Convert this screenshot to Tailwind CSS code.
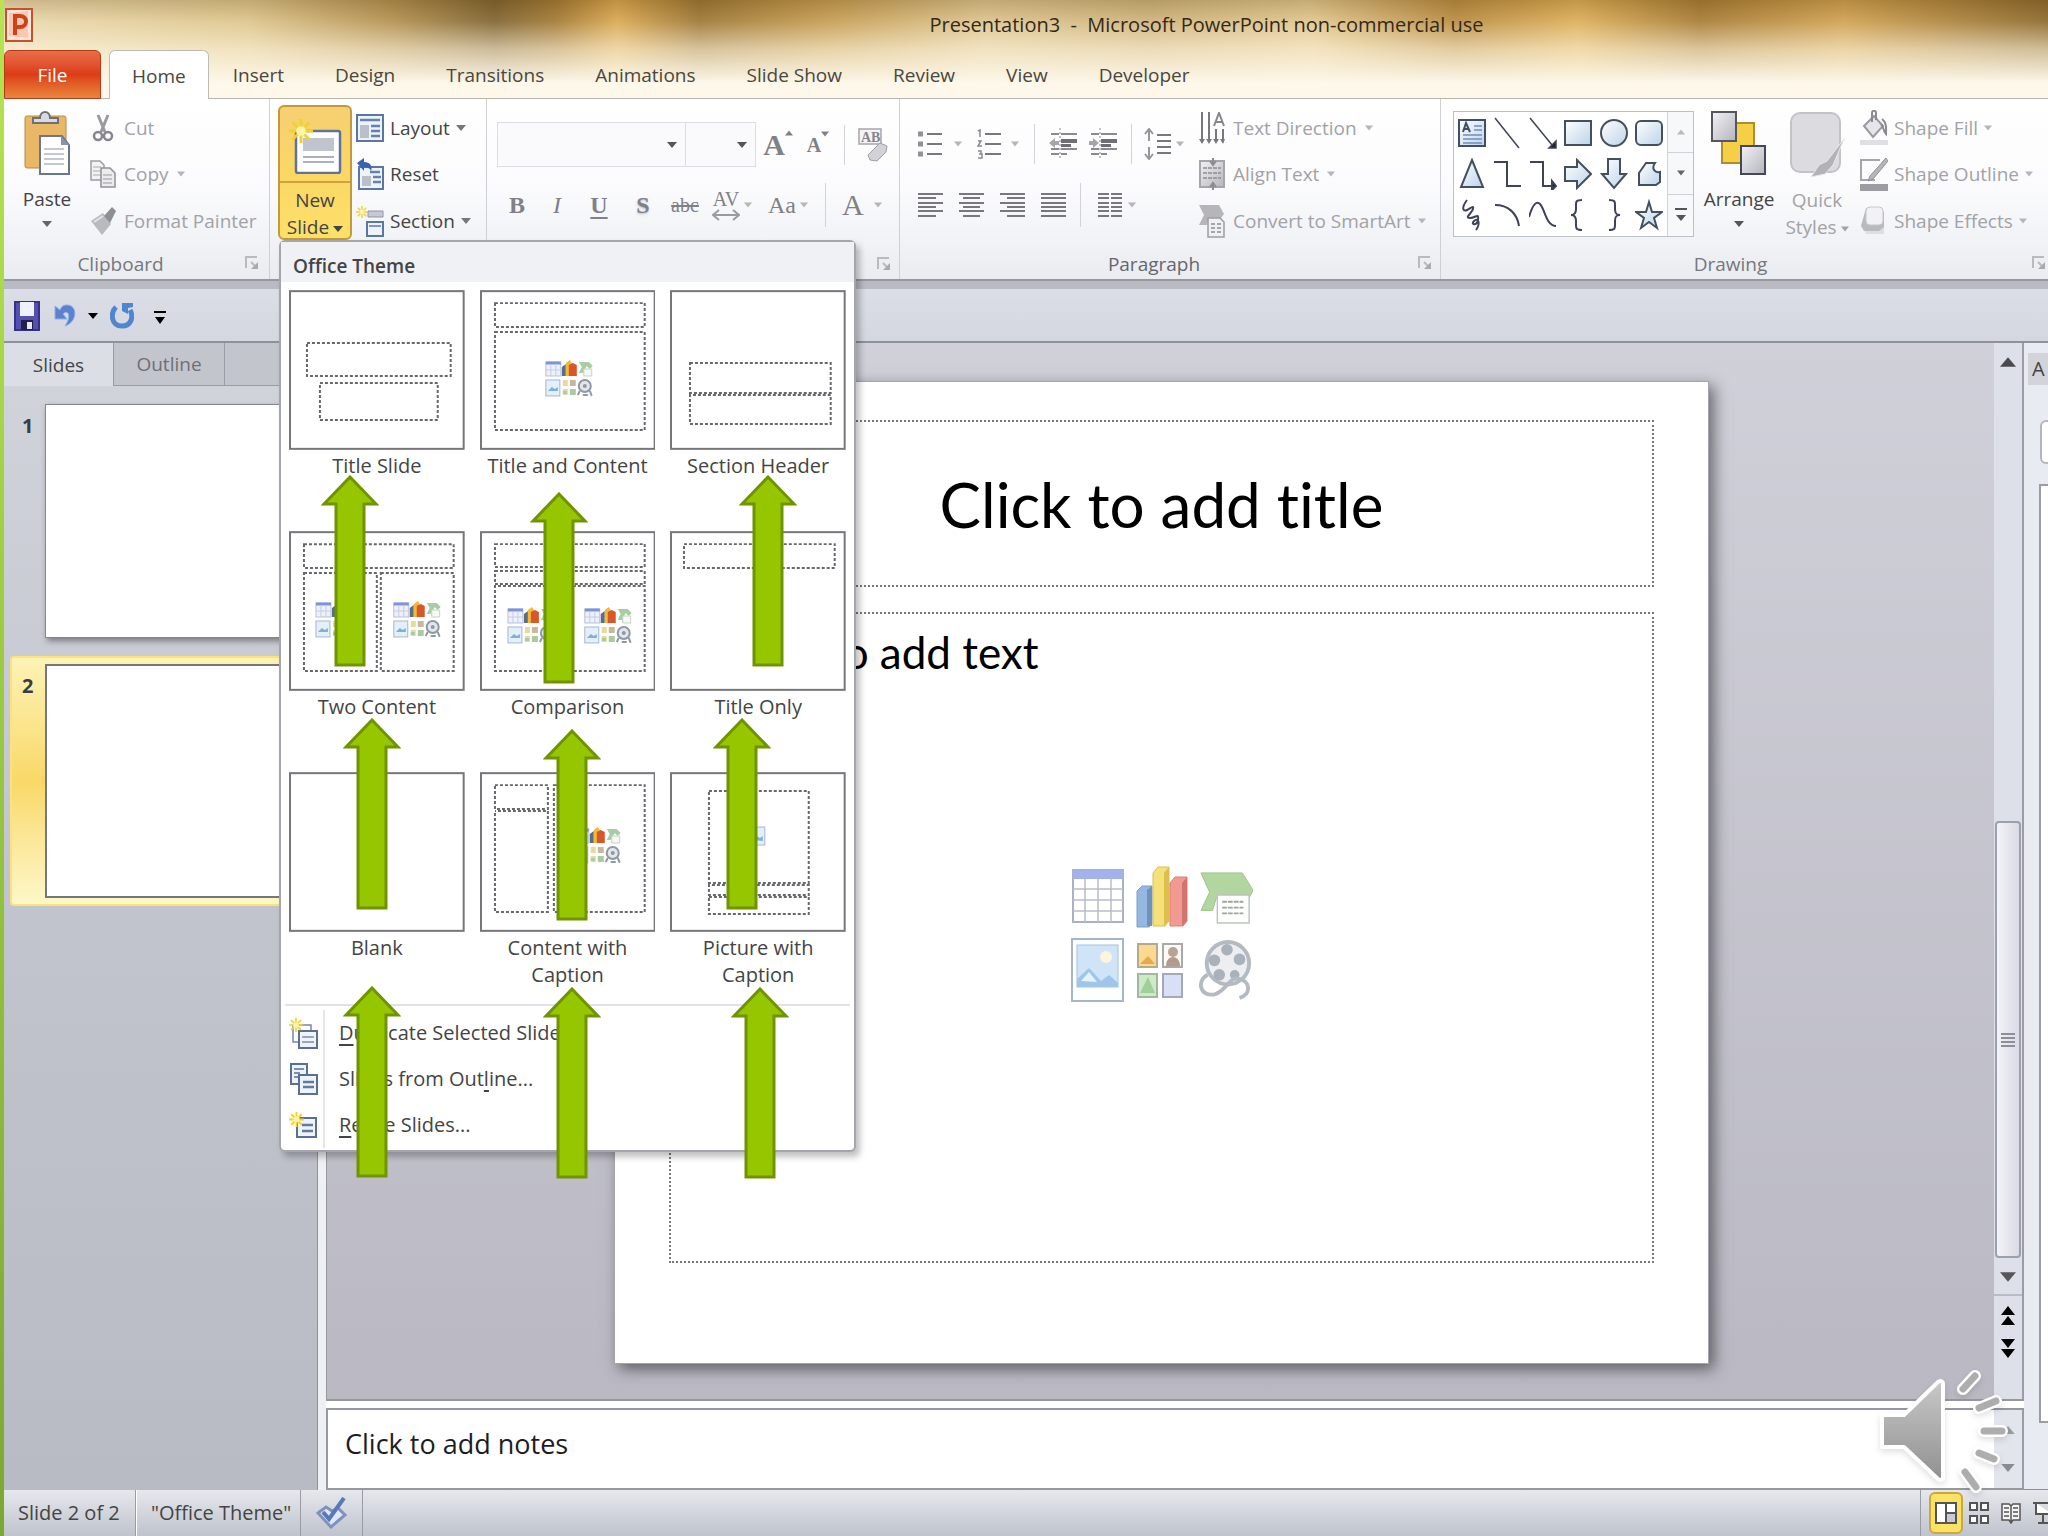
<!DOCTYPE html>
<html lang="en">
<head>
  <meta charset="UTF-8" />
  <meta name="viewport" content="width=device-width, initial-scale=1.0"/>
  <title>Presentation3 - Microsoft PowerPoint non-commercial use</title>
  <script src="https://cdn.jsdelivr.net/npm/@tailwindcss/browser@4"></script>
</head>
<body class="font-['Open_Sans','Noto_Sans',sans-serif] text-[19px] leading-7 text-[#444]">

  <!-- Icon sprite -->
  <svg class="absolute h-0 w-0" aria-hidden="true">
    <defs>
      <linearGradient id="gBlue" x1="0" y1="0" x2="1" y2="1"><stop offset="0" stop-color="#fff"/><stop offset="1" stop-color="#bcd3ea"/></linearGradient>
      <linearGradient id="gGrey" x1="0" y1="0" x2="1" y2="1"><stop offset="0" stop-color="#f2f2f5"/><stop offset="1" stop-color="#b4b4bc"/></linearGradient>
      <linearGradient id="gSpeaker" x1="0" y1="0" x2="0" y2="1"><stop offset="0" stop-color="#c8c8c8"/><stop offset="1" stop-color="#909090"/></linearGradient>
    </defs>
    <symbol id="caret" viewBox="0 0 10 6"><path d="M0 0h10L5 6z" fill="currentColor"/></symbol>
    <symbol id="launcher" viewBox="0 0 14 14"><path d="M1 12V1h11M6 6l5 5" fill="none" stroke="#b9b9c0" stroke-width="2"/><path d="M13 6v7H6z" fill="#a9a9b0"/></symbol>
    <symbol id="star" viewBox="0 0 20 20"><path d="M10 0v20M0 10h20M3 3l14 14M17 3L3 17" stroke="#f3cf2f" stroke-width="2.4"/><circle cx="10" cy="10" r="4" fill="#fff6a8"/></symbol>
    <symbol id="arrow" viewBox="0 0 58 192"><path d="M29 2L55 29H43V190H15V29H3z" fill="#95c600" stroke="#6f9400" stroke-width="3"/></symbol>
    <symbol id="contentIcons" viewBox="0 0 48 37">
      <rect x="1" y="2" width="15" height="14" fill="#eef1fa" stroke="#b5bfe0"/><path d="M1 3h15" stroke="#7f94d8" stroke-width="3"/><path d="M1 10h15M6 4v12M11 4v12" stroke="#c5cce4"/>
      <path d="M17 16V7l4-3v12z" fill="#5a6f86"/><path d="M21 16V3l4-3 2 3v13z" fill="#f2b93a"/><path d="M24 16V5l4-2 4 2v11z" fill="#d8572a"/>
      <path d="M34 2h10l4 4-3 3-3-3-4 7h-4l3-6z" fill="#a9cda2"/><path d="M39 9h8v7h-8z" fill="#f5f8f5" stroke="#c5d2c5"/>
      <rect x="1" y="20" width="14" height="16" fill="#e3f0fa" stroke="#a4b8d2"/><path d="M3 31l4-4 3 2 3-2v4z" fill="#7fb0d8"/>
      <path d="M18 20h5v6h-5zM18 29h5v6h-5z" fill="#e8d9a0"/><path d="M25 20h6v6h-6z" fill="#c8b8a0"/><path d="M25 29h6v6h-6zM18 31h4v3h-4z" fill="#a9cba0"/>
      <circle cx="40" cy="26" r="6" fill="#e3e6ea" stroke="#8f98a5" stroke-width="2"/><circle cx="40" cy="26" r="2" fill="#8f98a5"/><path d="M35 31l-2 4M45 31l2 5M38 35h5" stroke="#8f98a5" stroke-width="2"/>
    </symbol>
  </svg>

  <div class="relative flex h-screen overflow-hidden">
    <div class="w-1 shrink-0 bg-linear-to-b from-[#b5e550] to-[#7aa832]"></div>

    <div class="flex min-w-0 flex-1 flex-col">

      <!-- Title bar and ribbon tabs -->
      <header class="h-[99px] shrink-0 border-b border-[#b9b5ac] bg-[linear-gradient(to_bottom,rgba(90,60,10,0.2)_0%,rgba(255,245,215,0.1)_22%,rgba(255,247,225,0.6)_50%,#fdf8ea_85%),linear-gradient(to_right,#ead9b0_0%,#dcc48c_12%,#b28f50_19%,#7d6230_24%,#a17834_27%,#d9a750_30%,#9b7534_34%,#c39a50_40%,#dcc490_48%,#cdb27c_56%,#e0c68e_64%,#b88a40_71%,#dcae58_77%,#a67a34_83%,#cfa050_90%,#8a672c_100%)]">
        <div class="flex h-[50px] items-center">
          <svg class="ml-px h-[34px] w-7" viewBox="0 0 28 34"><rect x="1" y="1" width="26" height="32" fill="#fbe5d8" stroke="#c4532b" stroke-width="2"/><path d="M4 5l19-2v27L4 28z" fill="#f8c9b0"/><path d="M10 27V8h5c8 0 8 11 0 11h-4" fill="none" stroke="#cc431b" stroke-width="4"/></svg>
          <h1 class="flex-1 pl-[332px] text-center text-xl whitespace-pre text-[#33291a]">Presentation3  -  Microsoft PowerPoint non-commercial use</h1>
        </div>
        <nav class="flex h-[49px] items-stretch text-[#4a4640]">
          <button class="w-[97px] rounded-t-md border border-[#b8381a] bg-linear-to-b from-[#ea6d48] via-[#dc3c18] to-[#e8853c] text-white">File</button>
          <button class="-mb-px ml-2 rounded-t-md border border-b-0 border-[#c0bbb0] bg-white px-[22px]">Home</button>
          <div class="flex gap-[51px] pl-6">
            <button>Insert</button>
            <button>Design</button>
            <button>Transitions</button>
            <button>Animations</button>
            <button>Slide Show</button>
            <button>Review</button>
            <button>View</button>
            <button>Developer</button>
          </div>
        </nav>
      </header>

      <!-- Ribbon -->
      <div class="flex h-[182px] shrink-0 border-b-2 border-[#9698a0] bg-linear-to-b from-white via-[#fbfbfd] to-[#e9ecf0]">

        <!-- Clipboard -->
        <section class="flex w-[266px] shrink-0 flex-col border-r border-[#cfd0d6]">
          <div class="mt-1.5 flex h-[139px]">
            <button class="flex w-[86px] flex-col items-center pt-1.5">
              <svg class="h-[64px] w-12" viewBox="0 0 48 64"><rect x="2" y="5" width="41" height="52" rx="2" fill="#e9b765" stroke="#b98a40"/><path d="M10 12V7h7c0-8 10-8 10 0h8v5z" fill="#d8dade" stroke="#6d7078" stroke-width="2"/><path d="M17 25h22l7 9v29H17z" fill="#fff" stroke="#6a7690" stroke-width="2"/><path d="M38 25v9h8z" fill="#8a94a8"/><path d="M21 38h20M21 43h20M21 48h20M21 53h20" stroke="#b0b8c4" stroke-width="1.500"/></svg>
              <span class="mt-2.5">Paste</span>
              <svg class="mt-2 h-1.5 w-2.5 text-[#666]"><use href="#caret"/></svg>
            </button>
            <div class="flex flex-1 flex-col text-[#a2a2a6]">
              <button class="flex flex-1 items-center gap-2"><svg class="h-7 w-[26px]" viewBox="0 0 26 28"><path d="M8 1l7 17M18 1l-7 17" stroke="#9a9aa0" stroke-width="3"/><circle cx="8" cy="22" r="4" fill="none" stroke="#85858c" stroke-width="2.500"/><circle cx="18" cy="22" r="4" fill="none" stroke="#85858c" stroke-width="2.500"/></svg>Cut</button>
              <button class="flex flex-1 items-center gap-2"><svg class="h-7 w-[26px]" viewBox="0 0 26 28"><path d="M1 1h9l4 4v15H1z" fill="#f2f2f4" stroke="#9c9ca2" stroke-width="1.500"/><path d="M3 7h8M3 11h8M3 15h8" stroke="#aaa"/><path d="M11 8h9l5 5v14H11z" fill="#ececef" stroke="#909096" stroke-width="1.500"/><path d="M13 15h9M13 19h9M13 23h9" stroke="#999"/></svg>Copy<svg class="h-1.5 w-2 text-[#b5b5ba]"><use href="#caret"/></svg></button>
              <button class="flex flex-1 items-center gap-2 whitespace-nowrap"><svg class="h-[30px] w-[26px]" viewBox="0 0 26 30"><path d="M1 15l12-8 8 11-9 11z" fill="#b9b9bf"/><path d="M14 10l8-9 4 4-6 12z" fill="#8e8e95"/><path d="M4 16l9-6" stroke="#e4e4e8" stroke-width="2"/></svg>Format Painter</button>
            </div>
          </div>
          <div class="relative flex-1 pt-1.5 pr-8 text-center text-[#77777c]">Clipboard<svg class="absolute top-3 right-2.5 h-3.5 w-3.5"><use href="#launcher"/></svg></div>
        </section>

        <!-- Slides -->
        <section class="relative flex w-[217px] shrink-0 border-r border-[#cfd0d6] pt-1.5 pl-2">
          <button class="h-[135px] w-[74px] rounded-md border-2 border-[#c39a3a] bg-linear-to-b from-[#f6cf72] via-[#fbd765] to-[#fde06a]" aria-expanded="true">
            <span class="flex h-[76px] items-center justify-center border-b-2 border-[#d0a23c]">
              <svg class="h-[60px] w-[54px]" viewBox="0 0 54 60"><rect x="8" y="17" width="44" height="42" rx="2" fill="#fff" stroke="#5f7396" stroke-width="2.500"/><rect x="15" y="24" width="31" height="13" fill="#bfc4cf"/><path d="M15 43h31M15 48h31" stroke="#a9b0bf" stroke-width="2"/><use href="#star" x="1" y="4" width="24" height="26"/></svg>
            </span>
            <span class="block pt-1 leading-[27px] whitespace-nowrap">New<br>Slide<svg class="ml-1 inline h-1.5 w-2.5"><use href="#caret"/></svg></span>
          </button>
          <div class="flex h-[139px] flex-col pl-1">
            <button class="flex flex-1 items-center gap-1.5"><svg class="h-7 w-7" viewBox="0 0 28 28"><rect x="1" y="1" width="26" height="26" fill="#eef3fa" stroke="#5a76a5" stroke-width="2"/><path d="M4 6h20M15 12h9M15 17h9M15 22h9" stroke="#6481b0" stroke-width="2.500"/><rect x="4" y="11" width="9" height="13" fill="#b9c0cc"/></svg>Layout<svg class="h-1.5 w-2.5 text-[#777]"><use href="#caret"/></svg></button>
            <button class="flex flex-1 items-center gap-1.5"><svg class="h-8 w-7" viewBox="0 0 28 32"><rect x="3" y="9" width="24" height="22" fill="#eef3fa" stroke="#5a76a5" stroke-width="2"/><path d="M14 14h10M17 19h8M17 24h8" stroke="#6481b0" stroke-width="2.500"/><rect x="6" y="18" width="9" height="10" fill="#b9c0cc"/><path d="M1 5l7-5v4c6 0 9 4 7 9-1-3-4-4-7-4v4z" fill="#3b63b4"/></svg>Reset</button>
            <button class="flex flex-1 items-center gap-1.5"><svg class="h-8 w-7" viewBox="0 0 28 32"><path d="M12 6h15v6H12z" fill="#c5c9d2" stroke="#8c95a8"/><rect x="11" y="17" width="16" height="14" fill="#eef3fa" stroke="#5a76a5" stroke-width="2"/><path d="M13 21h12" stroke="#7f96be" stroke-width="2"/><use href="#star" width="12" height="14"/></svg>Section<svg class="h-1.5 w-2.5 text-[#777]"><use href="#caret"/></svg></button>
          </div>

          <!-- New Slide menu -->
          <div class="absolute top-[141px] left-[9px] z-20 w-[577px] rounded-md border-2 border-[#a4a6ae] bg-white pb-0.5 shadow-[4px_5px_6px_rgba(0,0,0,0.25)]">
            <h2 class="h-10 bg-[#f0f1f5] pt-2.5 pl-3 leading-7 font-semibold">Office Theme</h2>
            <div class="grid grid-cols-3 gap-x-[15px] px-2 pt-2 text-center text-xl leading-[27px]">
              <button class="flex h-[241px] flex-col items-center">
                <svg class="mb-0.5 h-[160px] w-full" viewBox="0 0 176 160" fill="none"><rect x="1" y="1" width="174" height="158" stroke="#77777b" stroke-width="2"/><g stroke="#67676c" stroke-width="2" stroke-dasharray="3 2"><rect x="18" y="53" width="144" height="33"/><rect x="31" y="93" width="118" height="37"/></g></svg>
                Title Slide
              </button>
              <button class="flex h-[241px] flex-col items-center whitespace-nowrap">
                <svg class="mb-0.5 h-[160px] w-full" viewBox="0 0 176 160" fill="none"><rect x="1" y="1" width="174" height="158" stroke="#77777b" stroke-width="2"/><g stroke="#67676c" stroke-width="2" stroke-dasharray="3 2"><rect x="15" y="13" width="150" height="24"/><rect x="15" y="42" width="150" height="98"/></g><use href="#contentIcons" x="65" y="70" width="48" height="37"/></svg>
                Title and Content
              </button>
              <button class="flex h-[241px] flex-col items-center">
                <svg class="mb-0.5 h-[160px] w-full" viewBox="0 0 176 160" fill="none"><rect x="1" y="1" width="174" height="158" stroke="#77777b" stroke-width="2"/><g stroke="#67676c" stroke-width="2" stroke-dasharray="3 2"><rect x="20" y="73" width="141" height="30"/><rect x="20" y="105" width="141" height="29" stroke-dashoffset="2"/></g></svg>
                Section Header
              </button>
              <button class="flex h-[241px] flex-col items-center">
                <svg class="mb-0.5 h-[160px] w-full" viewBox="0 0 176 160" fill="none"><rect x="1" y="1" width="174" height="158" stroke="#77777b" stroke-width="2"/><g stroke="#67676c" stroke-width="2" stroke-dasharray="3 2"><rect x="15" y="13" width="150" height="24"/><rect x="15" y="42" width="73" height="98"/><rect x="92" y="42" width="73" height="98"/></g><use href="#contentIcons" x="26" y="70" width="48" height="37"/><use href="#contentIcons" x="104" y="70" width="48" height="37"/></svg>
                Two Content
              </button>
              <button class="flex h-[241px] flex-col items-center">
                <svg class="mb-0.5 h-[160px] w-full" viewBox="0 0 176 160" fill="none"><rect x="1" y="1" width="174" height="158" stroke="#77777b" stroke-width="2"/><g stroke="#67676c" stroke-width="2" stroke-dasharray="3 2"><rect x="15" y="13" width="150" height="23"/><rect x="15" y="40" width="150" height="13"/><rect x="15" y="55" width="150" height="85" stroke-dashoffset="2"/></g><use href="#contentIcons" x="27" y="76" width="48" height="37"/><use href="#contentIcons" x="104" y="76" width="48" height="37"/></svg>
                Comparison
              </button>
              <button class="flex h-[241px] flex-col items-center">
                <svg class="mb-0.5 h-[160px] w-full" viewBox="0 0 176 160" fill="none"><rect x="1" y="1" width="174" height="158" stroke="#77777b" stroke-width="2"/><g stroke="#67676c" stroke-width="2" stroke-dasharray="3 2"><rect x="14" y="13" width="151" height="24"/></g></svg>
                Title Only
              </button>
              <button class="flex h-[232px] flex-col items-center">
                <svg class="mb-0.5 h-[160px] w-full" viewBox="0 0 176 160" fill="none"><rect x="1" y="1" width="174" height="158" stroke="#77777b" stroke-width="2"/></svg>
                Blank
              </button>
              <button class="flex h-[232px] flex-col items-center">
                <svg class="mb-0.5 h-[160px] w-full" viewBox="0 0 176 160" fill="none"><rect x="1" y="1" width="174" height="158" stroke="#77777b" stroke-width="2"/><g stroke="#67676c" stroke-width="2" stroke-dasharray="3 2"><rect x="15" y="13" width="53" height="24"/><rect x="15" y="39" width="53" height="101" stroke-dashoffset="2"/><rect x="74" y="13" width="91" height="127"/></g><use href="#contentIcons" x="93" y="55" width="48" height="37"/></svg>
                Content with<br>Caption
              </button>
              <button class="flex h-[232px] flex-col items-center">
                <svg class="mb-0.5 h-[160px] w-full" viewBox="0 0 176 160" fill="none"><rect x="1" y="1" width="174" height="158" stroke="#77777b" stroke-width="2"/><g stroke="#67676c" stroke-width="2" stroke-dasharray="3 2"><rect x="39" y="19" width="100" height="92"/><rect x="39" y="113" width="100" height="10" stroke-dashoffset="2"/><rect x="39" y="125" width="100" height="17"/></g><rect x="80" y="55" width="15" height="18" fill="#e3f0fa" stroke="#a4b8d2"/><path d="M82 68l5-4 3 2 3-2v5z" fill="#7fb0d8"/></svg>
                Picture with<br>Caption
              </button>
            </div>
            <div class="mx-1 border-t-2 border-[#e1e2e8] pt-1 text-xl">
              <button class="flex h-[46px] w-full items-center"><span class="flex h-full w-10 items-center border-r-2 border-[#e4e5ea] pl-1"><svg class="h-8 w-[30px]" viewBox="0 0 30 32"><path d="M4 8h18v17H4z" fill="#fff" stroke="#7688a8" stroke-width="1.500"/><rect x="10" y="14" width="18" height="17" fill="#eef3fa" stroke="#5a6f96" stroke-width="2"/><path d="M13 20h12M13 25h12" stroke="#98a5bd" stroke-width="2"/><use href="#star" width="14" height="16"/></svg></span><span class="pl-3.5"><u class="underline-offset-4">D</u>uplicate Selected Slides</span></button>
              <button class="flex h-[46px] w-full items-center"><span class="flex h-full w-10 items-center border-r-2 border-[#e4e5ea] pl-1"><svg class="h-8 w-[30px]" viewBox="0 0 30 32"><rect x="2" y="1" width="16" height="20" fill="#eef3fa" stroke="#5a6f96" stroke-width="2"/><path d="M5 6h10M5 10h6M5 14h4" stroke="#7f8fae" stroke-width="2"/><rect x="10" y="12" width="18" height="19" fill="#eef3fa" stroke="#5a6f96" stroke-width="2"/><path d="M14 19h11M14 24h11" stroke="#66789c" stroke-width="2.500"/></svg></span><span class="pl-3.5">Slides from Out<u class="underline-offset-4">l</u>ine...</span></button>
              <button class="flex h-[46px] w-full items-center"><span class="flex h-full w-10 items-center border-r-2 border-[#e4e5ea] pl-1"><svg class="h-7 w-[30px]" viewBox="0 0 30 28"><rect x="8" y="7" width="19" height="19" fill="#eef3fa" stroke="#5a6f96" stroke-width="2"/><path d="M13 14h11M13 20h11" stroke="#66789c" stroke-width="2.500"/><use href="#star" width="15" height="17"/></svg></span><span class="pl-3.5"><u class="underline-offset-4">R</u>euse Slides...</span></button>
            </div>
          </div>
        </section>

        <!-- Font -->
        <section class="relative w-[413px] shrink-0 border-r border-[#cfd0d6] pt-[23px] pl-2.5 font-['Liberation_Serif',serif] text-2xl text-[#808086]">
          <div class="flex h-[45px] items-center">
            <label class="relative flex h-full w-[189px] items-center border border-[#dcdce2] bg-[#fafafc]"><select aria-label="Font" class="h-full w-full appearance-none"><option></option></select><svg class="absolute right-2 h-1.5 w-2.5 text-[#555]"><use href="#caret"/></svg></label>
            <label class="relative flex h-full w-[70px] items-center border border-l-0 border-[#dcdce2] bg-[#fafafc]"><select aria-label="Font size" class="h-full w-full appearance-none"><option></option></select><svg class="absolute right-2 h-1.5 w-2.5 text-[#555]"><use href="#caret"/></svg></label>
            <button class="flex w-11 justify-center text-3xl leading-none font-bold">A<svg class="h-1.5 w-2 rotate-180"><use href="#caret"/></svg></button>
            <button class="flex w-9 justify-center text-xl leading-none font-bold">A<svg class="-mt-1 h-1.5 w-2"><use href="#caret"/></svg></button>
            <span class="mx-2 h-10 w-px bg-[#d2d2d8]"></span>
            <button class="flex w-10 justify-center"><svg class="h-9 w-[30px]" viewBox="0 0 30 36"><rect x="1" y="2" width="22" height="15" fill="#f4f4f6" stroke="#a5a5ab" stroke-width="1.500"/><text x="3" y="15" font-size="14" font-weight="bold" fill="#85858b">AB</text><path d="M10 28l12-12 7 3-1 6-9 9-7-1z" fill="#d2d2d8" stroke="#9e9ea4"/></svg></button>
          </div>
          <div class="mt-4 flex h-11 items-center font-bold">
            <button class="w-10">B</button>
            <button class="w-10 font-normal italic">I</button>
            <button class="w-11 underline underline-offset-4">U</button>
            <button class="w-11 text-shadow-md">S</button>
            <button class="w-10 text-xl font-normal line-through">abc</button>
            <button class="flex w-[54px] items-center justify-center gap-1 text-xl leading-none font-normal"><span>AV<svg class="h-3 w-7" viewBox="0 0 28 12"><path d="M1 6h26M7 1L1 6l6 5M21 1l6 5-6 5" fill="none" stroke="#9a9aa0" stroke-width="2"/></svg></span><svg class="h-1.5 w-2 text-[#b5b5ba]"><use href="#caret"/></svg></button>
            <button class="flex w-[58px] items-center justify-center gap-1 font-normal">Aa<svg class="h-1.5 w-2 text-[#b5b5ba]"><use href="#caret"/></svg></button>
            <span class="mx-2 h-11 w-px bg-[#d2d2d8]"></span>
            <button class="flex w-14 items-center justify-between px-2 text-3xl font-normal">A<svg class="h-1.5 w-2 text-[#b5b5ba]"><use href="#caret"/></svg></button>
          </div>
          <svg class="absolute right-2 bottom-2 h-3.5 w-3.5"><use href="#launcher"/></svg>
        </section>

        <!-- Paragraph -->
        <section class="flex w-[541px] shrink-0 flex-col border-r border-[#cfd0d6] text-[#a2a2a6]">
          <div class="mt-1.5 flex h-[139px] pl-2.5">
            <div class="w-[289px] pt-4">
              <div class="flex h-[46px] items-center">
                <button class="flex w-[60px] items-center justify-center gap-3"><svg class="h-7 w-6" viewBox="0 0 24 28"><path d="M9 4h15M9 14h15M9 24h15" stroke="#77777d" stroke-width="2"/><path d="M0 4h5M0 14h5M0 24h5" stroke="#909096" stroke-width="5"/></svg><svg class="h-1.5 w-2 text-[#b5b5ba]"><use href="#caret"/></svg></button>
                <button class="flex w-14 items-center justify-center gap-2.5"><svg class="h-8 w-6" viewBox="0 0 24 32"><path d="M8 6h16M8 16h16M8 26h16" stroke="#77777d" stroke-width="2"/><path d="M1 3l2-1v7M1 13h3l-3 5h4M1 23h3v3H2h3v4H1" fill="none" stroke="#88888e" stroke-width="1.500"/></svg><svg class="h-1.5 w-2 text-[#b5b5ba]"><use href="#caret"/></svg></button>
                <span class="mx-2 h-10 w-px bg-[#d2d2d8]"></span>
                <button class="flex w-10 justify-center"><svg class="h-8 w-7" viewBox="0 0 28 32"><path d="M2 6h8M2 21h8M2 26h8M12 6h16M12 21h16M12 26h6" stroke="#8a8a90" stroke-width="2"/><path d="M12 11h16v4H12zM12 16h10v3H12z" fill="#6e6e74"/><path d="M11 0v32" stroke="#8a8a90" stroke-dasharray="2 2"/><path d="M0 15l6-5v3h4v4H6v3z" fill="#a5a5ab"/></svg></button>
                <button class="flex w-10 justify-center"><svg class="h-8 w-7" viewBox="0 0 28 32"><path d="M2 6h8M2 21h8M2 26h8M12 6h16M12 21h16M12 26h6" stroke="#8a8a90" stroke-width="2"/><path d="M12 11h16v4H12zM12 16h10v3H12z" fill="#6e6e74"/><path d="M11 0v32" stroke="#8a8a90" stroke-dasharray="2 2"/><path d="M10 15l-6-5v3H0v4h4v3z" fill="#a5a5ab"/></svg></button>
                <span class="mx-2 h-10 w-px bg-[#d2d2d8]"></span>
                <button class="flex w-12 items-center justify-center gap-1"><svg class="h-8 w-7" viewBox="0 0 28 32"><path d="M5 1v12M1 6l4-5 4 5M5 19v12M1 26l4 5 4-5" fill="none" stroke="#96969c" stroke-width="2"/><path d="M13 7h14M13 13h14M13 19h14M13 25h14" stroke="#77777d" stroke-width="2"/></svg><svg class="h-1.5 w-2 text-[#b5b5ba]"><use href="#caret"/></svg></button>
              </div>
              <div class="mt-4 flex h-[44px] items-center">
                <button class="flex w-[41px] justify-center"><svg class="h-6 w-[25px]" viewBox="0 0 25 24"><path d="M0 1h25M0 10h25M0 18h25M0 5h18M0 14h18M0 23h18" stroke="#77777d" stroke-width="2"/></svg></button>
                <button class="flex w-[41px] justify-center"><svg class="h-6 w-[25px]" viewBox="0 0 25 24"><path d="M0 1h25M0 10h25M0 18h25M4 5h17M4 14h17M4 23h17" stroke="#77777d" stroke-width="2"/></svg></button>
                <button class="flex w-[41px] justify-center"><svg class="h-6 w-[25px]" viewBox="0 0 25 24"><path d="M0 1h25M0 10h25M0 18h25M7 5h18M7 14h18M7 23h18" stroke="#77777d" stroke-width="2"/></svg></button>
                <button class="flex w-[41px] justify-center"><svg class="h-6 w-[25px]" viewBox="0 0 25 24"><path d="M0 1h25M0 10h25M0 18h25M0 5h25M0 14h25M0 23h25" stroke="#77777d" stroke-width="2"/></svg></button>
                <span class="mx-1.5 h-11 w-px bg-[#d2d2d8]"></span>
                <button class="flex w-[60px] items-center justify-center gap-1.5"><svg class="h-6 w-6" viewBox="0 0 24 24"><path d="M0 1h11M0 10h11M0 18h11M0 5h11M0 14h11M0 23h11M13 1h11M13 10h11M13 18h11M13 5h11M13 14h11M13 23h11" stroke="#77777d" stroke-width="2"/></svg><svg class="h-1.5 w-2 text-[#b5b5ba]"><use href="#caret"/></svg></button>
              </div>
            </div>
            <div class="flex flex-1 flex-col whitespace-nowrap">
              <button class="flex flex-1 items-center gap-2"><svg class="h-8 w-[26px]" viewBox="0 0 26 32"><path d="M3 0v30M10 0v30M17 17v13M24 17v13" stroke="#77777d" stroke-width="2"/><path d="M0 27h6l-3 5zM7 27h6l-3 5zM14 27h6l-3 5zM21 27h5l-2 5z" fill="#77777d"/><path d="M15 14l5-13 5 13M17 10h6" fill="none" stroke="#85858b" stroke-width="2"/></svg>Text Direction<svg class="h-1.5 w-2 text-[#b5b5ba]"><use href="#caret"/></svg></button>
              <button class="flex flex-1 items-center gap-2"><svg class="h-8 w-[26px]" viewBox="0 0 26 32"><rect x="1" y="3" width="24" height="26" fill="url(#gGrey)" stroke="#a5a5ab" stroke-width="2"/><path d="M4 10h18M4 15h18M4 20h18" stroke="#8d8d93" stroke-dasharray="4 1" stroke-width="1.500"/><path d="M14 0v6M11 3l3 4 3-4M14 32v-6M11 29l3-4 3 4" fill="none" stroke="#8d8d93" stroke-width="2"/></svg>Align Text<svg class="h-1.5 w-2 text-[#b5b5ba]"><use href="#caret"/></svg></button>
              <button class="flex flex-1 items-center gap-2"><svg class="h-[34px] w-[26px]" viewBox="0 0 26 34"><path d="M0 1h20l5 9-3 4H10l-2 7H0l5-10z" fill="#b5b5ba"/><path d="M9 14h12l4 4v15H9z" fill="#f0f0f3" stroke="#9c9ca2" stroke-width="1.500"/><path d="M12 20h4M18 20h4M12 24h4M18 24h4M12 28h4M18 28h4" stroke="#a5a5ab" stroke-width="2"/></svg>Convert to SmartArt<svg class="h-1.5 w-2 text-[#b5b5ba]"><use href="#caret"/></svg></button>
            </div>
          </div>
          <div class="relative flex-1 pt-1.5 pr-8 text-center text-[#66666b]">Paragraph<svg class="absolute top-3 right-2 h-3.5 w-3.5"><use href="#launcher"/></svg></div>
        </section>

        <!-- Drawing -->
        <section class="flex min-w-0 flex-1 flex-col">
          <div class="mt-1.5 flex h-[139px] pl-3">
            <div class="mt-1.5 flex h-[126px] w-[241px] shrink-0 border border-[#bcbfc8] bg-white">
              <div class="grid flex-1 grid-cols-6 place-items-center" role="group" aria-label="Shapes">
                <button aria-label="Text box"><svg class="h-8 w-7" viewBox="0 0 28 32" fill="url(#gBlue)" stroke="#3f4f68" stroke-width="2"><rect x="1" y="3" width="26" height="26"/><path d="M16 9h8M16 13h8M5 18h19M5 22h19M5 26h19" stroke="#6f8fb5" stroke-width="1.500"/><path d="M5 15l3-9 4 9M6 12h4" fill="none"/></svg></button>
                <button aria-label="Line"><svg class="h-8 w-7" viewBox="0 0 28 32" stroke="#3f4358" stroke-width="1.500"><path d="M2 1l24 30"/></svg></button>
                <button aria-label="Arrow"><svg class="h-8 w-7" viewBox="0 0 28 32" stroke="#3f4358" stroke-width="1.500"><path d="M1 1l22 27"/><path d="M27 24v7h-7z" fill="#222"/></svg></button>
                <button aria-label="Rectangle"><svg class="h-8 w-7" viewBox="0 0 28 32" fill="url(#gBlue)" stroke="#45505f" stroke-width="2"><rect x="1" y="4" width="26" height="24"/></svg></button>
                <button aria-label="Oval"><svg class="h-8 w-7" viewBox="0 0 28 32" fill="url(#gBlue)" stroke="#45505f" stroke-width="2"><ellipse cx="14" cy="16" rx="13" ry="13"/></svg></button>
                <button aria-label="Rounded rectangle"><svg class="h-8 w-7" viewBox="0 0 28 32" fill="url(#gBlue)" stroke="#45505f" stroke-width="2"><rect x="1" y="4" width="26" height="24" rx="5"/></svg></button>
                <button aria-label="Triangle"><svg class="h-8 w-7" viewBox="0 0 28 32" fill="url(#gBlue)" stroke="#45505f" stroke-width="2"><path d="M14 2L25 29H3z"/></svg></button>
                <button aria-label="Elbow connector"><svg class="h-8 w-7" viewBox="0 0 28 32" fill="none" stroke="#3f4358" stroke-width="2"><path d="M1 4h13v24h14"/></svg></button>
                <button aria-label="Elbow arrow"><svg class="h-8 w-7" viewBox="0 0 28 32" fill="none" stroke="#3f4358" stroke-width="2"><path d="M1 4h13v24h10"/><path d="M23 23v9l4-4z" fill="#222"/></svg></button>
                <button aria-label="Right arrow"><svg class="h-8 w-7" viewBox="0 0 28 32" fill="url(#gBlue)" stroke="#45505f" stroke-width="2"><path d="M1 9h12V2l14 14-14 14v-7H1z"/></svg></button>
                <button aria-label="Down arrow"><svg class="h-8 w-7" viewBox="0 0 28 32" fill="url(#gBlue)" stroke="#45505f" stroke-width="2"><path d="M8 1v15H2l12 14 12-14h-6V1z"/></svg></button>
                <button aria-label="Freeform"><svg class="h-8 w-7" viewBox="0 0 28 32" fill="url(#gBlue)" stroke="#45505f" stroke-width="2"><path d="M4 27V15L11 5h9c-4 6 0 10 5 9v10l-4 3z"/></svg></button>
                <button aria-label="Scribble"><svg class="h-8 w-7" viewBox="0 0 28 32" fill="none" stroke="#3f4358" stroke-width="2"><path d="M9 1C3 9 5 13 9 11s7-5 6-1-9 9-3 9 9-6 8 2c-1 6-8 5-4 1s7 2 2 9"/></svg></button>
                <button aria-label="Arc"><svg class="h-8 w-7" viewBox="0 0 28 32" fill="none" stroke="#3f4358" stroke-width="2"><path d="M2 6c13 0 22 8 24 21"/></svg></button>
                <button aria-label="Curve"><svg class="h-8 w-7" viewBox="0 0 28 32" fill="none" stroke="#3f4358" stroke-width="2"><path d="M0 18C4 4 8 2 11 5c5 5 6 22 16 22"/></svg></button>
                <button aria-label="Left brace"><svg class="h-8 w-7" viewBox="0 0 28 32" fill="none" stroke="#3f4358" stroke-width="2"><path d="M18 1c-7 0-6 2-6 9 0 4-1 6-5 6 4 0 5 2 5 6 0 7-1 9 6 9"/></svg></button>
                <button aria-label="Right brace"><svg class="h-8 w-7" viewBox="0 0 28 32" fill="none" stroke="#3f4358" stroke-width="2"><path d="M9 1c7 0 6 2 6 9 0 4 1 6 5 6-4 0-5 2-5 6 0 7 1 9-6 9"/></svg></button>
                <button aria-label="Star"><svg class="h-8 w-7" viewBox="0 0 28 32" fill="url(#gBlue)" stroke="#45505f" stroke-width="2"><path d="M14 3l3 10h10l-8 6 3 10-8-6-8 6 3-10-8-6h10z"/></svg></button>
              </div>
              <div class="grid w-[26px] grid-rows-3 divide-y divide-[#d0d2d9] border-l border-[#d0d2d9] bg-[#f7f8fa]">
                <button class="grid place-items-center" aria-label="Scroll up"><svg class="h-1.5 w-2 rotate-180 text-[#bbb]"><use href="#caret"/></svg></button>
                <button class="grid place-items-center" aria-label="Scroll down"><svg class="h-1.5 w-2 text-[#666]"><use href="#caret"/></svg></button>
                <button class="grid place-items-center" aria-label="More shapes"><svg class="h-3.5 w-3" viewBox="0 0 12 14"><path d="M0 1h12" stroke="#555" stroke-width="2"/><path d="M1 7h10l-5 6z" fill="#555"/></svg></button>
              </div>
            </div>
            <button class="flex w-[90px] shrink-0 flex-col items-center pt-1.5">
              <svg class="h-[64px] w-14" viewBox="0 0 56 64"><rect x="11" y="12" width="32" height="40" fill="#f5cf45" stroke="#b08d2c" stroke-width="2"/><rect x="1" y="1" width="24" height="29" fill="url(#gGrey)" stroke="#55565f" stroke-width="2"/><rect x="30" y="35" width="24" height="28" fill="url(#gGrey)" stroke="#44465a" stroke-width="2"/></svg>
              <span class="mt-2.5">Arrange</span>
              <svg class="mt-2 h-1.5 w-2.5 text-[#555]"><use href="#caret"/></svg>
            </button>
            <button class="flex w-[66px] shrink-0 flex-col items-center pt-1.5 leading-[27px] text-[#a2a2a6]">
              <svg class="h-[66px] w-14" viewBox="0 0 56 66"><rect x="2" y="2" width="49" height="59" rx="9" fill="#dcdce0" stroke="#c2c2c8" stroke-width="2"/><path d="M55 28L38 50l-8 4-8 12 14-3 8-9z" fill="#b2b2b8" stroke="#e8e8ec"/></svg>
              <span class="mt-2.5">Quick</span>
              <span class="whitespace-nowrap">Styles<svg class="ml-1 inline h-1.5 w-2"><use href="#caret"/></svg></span>
            </button>
            <div class="flex shrink-0 flex-col pl-2.5 whitespace-nowrap text-[#a2a2a6]">
              <button class="flex flex-1 items-center gap-1.5"><svg class="h-9 w-7" viewBox="0 0 28 36"><path d="M4 16L14 6l9 10-10 11z" fill="#e6e6ea" stroke="#9a9aa0" stroke-width="2"/><path d="M12 12V3c0-3 4-3 4 0v7M22 9c5 4 4 9 4 15-3-3-2-7-5-10" fill="none" stroke="#8a8a90" stroke-width="2"/><path d="M0 30h28v5H0z" fill="#e0e0e4"/></svg>Shape Fill<svg class="h-1.5 w-2 text-[#b5b5ba]"><use href="#caret"/></svg></button>
              <button class="flex flex-1 items-center gap-1.5"><svg class="h-9 w-7" viewBox="0 0 28 36"><path d="M20 4H1v20h14" fill="none" stroke="#a5a5ab" stroke-width="2"/><path d="M26 2L10 20l-2 5 5-2L28 5z" fill="#b5b5bb" stroke="#8f8f95"/><path d="M0 28h28v7H0z" fill="#9c9ca2"/></svg>Shape Outline<svg class="h-1.5 w-2 text-[#b5b5ba]"><use href="#caret"/></svg></button>
              <button class="flex flex-1 items-center gap-1.5"><svg class="h-8 w-7" viewBox="0 0 28 32"><path d="M4 22h20v7H6z" fill="#dedee2"/><path d="M6 3h14l4 4v15l-5 4H4l-3-5z" fill="#b9b9be"/><rect x="6" y="2" width="17" height="18" rx="4" fill="#f2f2f4" stroke="#c6c6ca"/></svg>Shape Effects<svg class="h-1.5 w-2 text-[#b5b5ba]"><use href="#caret"/></svg></button>
            </div>
          </div>
          <div class="relative flex-1 pt-1.5 pr-7 text-center text-[#77777c]">Drawing<svg class="absolute top-3 right-0.5 h-3.5 w-3.5"><use href="#launcher"/></svg></div>
        </section>
      </div>

      <!-- Quick access toolbar -->
      <div class="flex h-[62px] shrink-0 items-center gap-3 border-t-8 border-b-2 border-t-[#b9bac2] border-b-[#8f9199] bg-linear-to-b from-[#dcdee7] to-[#d4d6e0] pt-0.5 pl-2.5">
        <button aria-label="Save"><svg class="h-[30px] w-[26px]" viewBox="0 0 26 30"><path d="M1 1h24v28H1z" fill="#5550b0" stroke="#35318a" stroke-width="2"/><path d="M6 1h14v14H6z" fill="#eef2ff"/><path d="M7 19h12v10H7z" fill="#22204a"/><path d="M13 21h5v7h-5z" fill="#e8e8f4"/></svg></button>
        <button class="flex items-center gap-2.5" aria-label="Undo"><svg class="ml-0.5 h-7 w-6" viewBox="0 0 24 28"><path d="M1 4v13h12l-4-5c5-5 9 2 2 12 13-4 13-22 1-21-3 0-5 2-6 5z" fill="#5a82cf" stroke="#8fb0e6"/></svg><svg class="h-1.5 w-2.5 text-black"><use href="#caret"/></svg></button>
        <button aria-label="Repeat"><svg class="h-7 w-6" viewBox="0 0 24 28"><path d="M6 5C0 11 1 24 12 24c9 0 12-9 8-16" fill="none" stroke="#4e86cf" stroke-width="5"/><path d="M12 1h11v4l-5 1v6l-6-3z" fill="#4e86cf"/></svg></button>
        <button class="mt-1 ml-1.5" aria-label="Customize toolbar"><svg class="h-3.5 w-4" viewBox="0 0 16 14"><path d="M2 1h12" stroke="#000" stroke-width="2"/><path d="M3 6h10l-5 7z"/></svg></button>
      </div>

      <!-- Workspace -->
      <main class="flex min-h-0 flex-1">

        <!-- Slides pane -->
        <aside class="w-[314px] shrink-0 border-r border-[#8f9199] bg-linear-to-b from-[#d2d4dc] via-[#c2c4cd] to-[#b8bbc4]">
          <div class="flex h-[43px] items-stretch">
            <button class="w-[109px] bg-[#dcdee6]">Slides</button>
            <button class="w-[112px] border-x border-b border-[#9a9ca5] bg-[#c3c5cd] text-[#6f6f76]">Outline</button>
            <span class="flex-1 border-b border-[#9a9ca5] bg-[#c3c5cd]"></span>
          </div>
          <ol class="text-xl font-bold text-[#3b3b40]">
            <li class="mt-2.5 flex py-2 pl-1.5"><span class="w-[35px] pt-2 pl-3">1</span><span class="h-[234px] w-[250px] border border-[#85878f] bg-white shadow-[2px_3px_6px_rgba(0,0,0,0.4)]"></span></li>
            <li class="mt-2.5 ml-1.5 flex rounded-l border-y-2 border-l-2 border-[#fbe27a] bg-linear-to-b from-[#fdf3b5] via-[#f9d866] to-[#fdf7c8] py-[6px]"><span class="w-[33px] pt-2 pl-2.5">2</span><span class="h-[234px] w-[250px] border-2 border-[#75777f] bg-white"></span></li>
          </ol>
        </aside>

        <div class="flex min-w-0 flex-1 flex-col border-l-8 border-[#eef0f4]">
          <!-- Slide canvas -->
          <div class="flex min-h-0 flex-1 border-b-2 border-l border-[#9698a0]">
            <div class="min-w-0 flex-1 bg-linear-to-b from-[#d0d0d9] to-[#bab9c3] pt-[38px] pl-[287px]">
              <article class="h-[983px] w-[1095px] border border-[#a5a5ad] bg-white px-[54px] pt-[38px] font-['Lato',sans-serif] text-black shadow-[5px_5px_14px_rgba(0,0,0,0.5)] [font-variant-ligatures:none]">
                <h2 class="flex h-[167px] items-center justify-center border-2 border-dotted border-[#77777b] text-[62px]">Click to add title</h2>
                <div class="mt-[25px] h-[651px] border-2 border-dotted border-[#77777b] pt-2 pl-4">
                  <ul class="list-disc pl-9 text-[44px] leading-[60px]"><li>Click to add text</li></ul>
                  <div class="mx-auto mt-[183px] grid w-[198px] grid-cols-3 gap-x-2.5 gap-y-2 pr-4">
                    <button aria-label="Insert table"><svg class="h-16 w-[54px]" viewBox="0 0 54 64"><rect x="2" y="5" width="50" height="52" fill="#fff" stroke="#a9b0c8" stroke-width="2"/><path d="M2 5h50v9H2z" fill="#a3b2ea"/><path d="M2 24h50M2 35h50M2 46h50M14 14v43M27 14v43M40 14v43" stroke="#b9bdc9" stroke-width="1.500"/></svg></button>
                    <button aria-label="Insert chart"><svg class="h-16 w-[54px]" viewBox="0 0 54 64"><path d="M2 26l5-5h10v38l-3 3H2z" fill="#94b8e0" stroke="#7fa0cc"/><path d="M12 25l5-4v40h-5z" fill="#6d92c2"/><path d="M18 8l5-6h11v54l-4 5H18z" fill="#f5e07a" stroke="#dcc04a"/><path d="M29 8l5-6v54l-5 5z" fill="#dcbf4e"/><path d="M35 18l5-6h12v44l-4 5H35z" fill="#f09a92" stroke="#de7c74"/><path d="M47 18l5-6v44l-5 5z" fill="#d4746e"/></svg></button>
                    <button aria-label="Insert SmartArt"><svg class="h-16 w-[54px]" viewBox="0 0 56 64"><path d="M2 7h43l11 18-4 8H18L14 46H2l9-19z" fill="#b2d6a0" stroke="#9cc489"/><path d="M19 30h33v29H19z" fill="#fff" stroke="#bcc4bc" stroke-width="1.500"/><path d="M24 37h22M24 43h22M24 49h22" stroke="#9aa69a" stroke-width="2" stroke-dasharray="5 1"/></svg></button>
                    <button aria-label="Insert picture"><svg class="h-[66px] w-[54px]" viewBox="0 0 54 66"><rect x="1" y="2" width="51" height="62" fill="#fdfeff" stroke="#a8b4cc" stroke-width="2"/><rect x="6" y="8" width="41" height="42" fill="#cfe5f7" stroke="#a5c2de"/><circle cx="35" cy="20" r="6" fill="#fff3dc"/><path d="M6 50V42l12-11 12 13 8-6 9 8v4z" fill="#9fc6e8"/><path d="M10 44l8-9 8 10z" fill="#e6f2fb"/></svg></button>
                    <button aria-label="Insert clip art"><svg class="h-[66px] w-[54px]" viewBox="0 0 54 66"><rect x="3" y="7" width="19" height="23" fill="#fbd98e" stroke="#b5aa8c" stroke-width="2"/><path d="M5 27l8-8 7 8z" fill="#e8a84c"/><rect x="28" y="7" width="19" height="23" fill="#fdfaf6" stroke="#a9a9a9" stroke-width="2"/><circle cx="38" cy="15" r="5" fill="#b8a294"/><path d="M31 29c0-12 14-12 14 0z" fill="#b59a8c"/><rect x="3" y="37" width="19" height="23" fill="#cdeac6" stroke="#a4b5a4" stroke-width="2"/><path d="M5 56l8-16 7 16z" fill="#9ed09a"/><rect x="28" y="37" width="19" height="23" fill="#d8e0f8" stroke="#a4a9b9" stroke-width="2"/></svg></button>
                    <button aria-label="Insert media clip"><svg class="h-[66px] w-[54px]" viewBox="0 0 56 66"><circle cx="30" cy="26" r="22" fill="#eceef1" stroke="#b4bac1" stroke-width="4"/><g fill="#a9b1ba"><circle cx="29" cy="12" r="6"/><circle cx="16" cy="23" r="6"/><circle cx="42" cy="22" r="6"/><circle cx="21" cy="38" r="6"/><circle cx="37" cy="38" r="5"/></g><path d="M9 38c-12 6-8 24 8 20 12-4 14-18 24-16 12 2 14 16 1 20" fill="none" stroke="#b4bac1" stroke-width="4"/></svg></button>
                  </div>
                </div>
              </article>
            </div>

            <!-- Vertical scroll bar -->
            <div class="flex w-[30px] shrink-0 flex-col items-center border-r-2 border-[#9b9da6] bg-[#dde0e8] pt-3.5">
              <button aria-label="Scroll up"><svg class="block h-2.5 w-4 rotate-180 text-[#4a4a50]"><use href="#caret"/></svg></button>
              <div class="mt-[454px] grid h-[437px] w-[26px] shrink-0 place-items-center rounded-sm border-2 border-[#9da0aa] bg-linear-to-r from-[#f3f3f9] to-[#d9dae4]"><svg class="h-4 w-3.5" viewBox="0 0 14 16"><path d="M0 2h14M0 6h14M0 10h14M0 14h14" stroke="#8c8e98" stroke-width="2"/></svg></div>
              <button class="mt-3.5" aria-label="Scroll down"><svg class="block h-2.5 w-4 text-[#55555b]"><use href="#caret"/></svg></button>
              <span class="mt-3 h-0.5 w-full bg-[#b9bbc4]"></span>
              <button class="mt-2.5" aria-label="Previous slide"><svg class="block h-5 w-3.5" viewBox="0 0 14 20"><path d="M7 0l7 9H0zM7 10l7 9H0z"/></svg></button>
              <button class="mt-3" aria-label="Next slide"><svg class="block h-5 w-3.5" viewBox="0 0 14 20"><path d="M7 10L0 1h14zM7 20l-7-9h14z"/></svg></button>
            </div>
          </div>

          <!-- Notes -->
          <div class="mt-[7px] flex h-[82px] shrink-0 border-y-2 border-l-2 border-[#9698a0] bg-white">
            <textarea aria-label="Notes" class="min-w-0 flex-1 resize-none px-[17px] pt-4 text-[27px] leading-9 text-[#1d1d1f]">Click to add notes</textarea>
            <div class="flex w-[30px] shrink-0 flex-col items-center justify-between border-r-2 border-[#9b9da6] bg-[#e3e5ec] py-4">
              <button aria-label="Scroll notes up"><svg class="block h-2 w-3.5 rotate-180 text-[#9a9ca4]"><use href="#caret"/></svg></button>
              <button aria-label="Scroll notes down"><svg class="block h-2 w-3.5 text-[#8a8c94]"><use href="#caret"/></svg></button>
            </div>
          </div>
        </div>

        <!-- Task pane edge -->
        <aside class="flex w-6 shrink-0 flex-col overflow-hidden border-b border-[#8f9199] bg-[#e9ebf2] text-xl">
          <div class="mt-2.5 ml-1 h-8 bg-[#d3d4da] pl-1 leading-8">A</div>
          <div class="mt-[35px] ml-4 h-11 w-10 shrink-0 rounded-md border-2 border-[#b4b6be] bg-white"></div>
          <div class="mt-5 mb-[66px] ml-[15px] w-10 flex-1 border-2 border-[#9b9da6] bg-white"></div>
        </aside>
      </main>

      <!-- Status bar -->
      <footer class="flex h-[46px] shrink-0 items-stretch bg-linear-to-b from-[#e6e8ed] via-[#d2d5dc] to-[#bfc3cc] text-xl leading-[46px]">
        <span class="w-[132px] border-r border-[#9a9ca5] pl-3.5">Slide 2 of 2</span>
        <span class="w-[165px] border-r border-l border-[#9a9ca5] border-l-white pl-3.5">"Office Theme"</span>
        <button class="flex w-[62px] items-center justify-center border-r border-[#9a9ca5]" aria-label="Spelling"><svg class="h-8 w-8" viewBox="0 0 32 32"><path d="M2 16l8-6 6 4 6-3 7 7-14 12z" fill="#dfe8f8" stroke="#7e92bd" stroke-width="3"/><path d="M7 15l6 7L28 1" fill="none" stroke="#5878b8" stroke-width="4"/></svg></button>
        <div class="ml-auto flex w-[128px] items-center overflow-hidden border-l border-[#9a9ca5]">
          <button class="ml-2 grid h-[42px] w-[34px] shrink-0 place-items-center rounded-md border-2 border-[#c9a93c] bg-[#fbe264]" aria-label="Normal view"><svg class="h-[22px] w-[22px]" viewBox="0 0 22 22"><rect x="1" y="1" width="20" height="20" fill="#fff" stroke="#555" stroke-width="2"/><path d="M11 1v20M11 11h10" stroke="#555" stroke-width="2"/><path d="M12 12h8v8h-8z" fill="#c9cbd3"/></svg></button>
          <button class="ml-1.5 shrink-0" aria-label="Slide sorter"><svg class="h-[22px] w-5" viewBox="0 0 20 22" fill="#fff" stroke="#555" stroke-width="2"><path d="M1 1h7v7H1zM12 1h7v7h-7zM1 14h7v7H1zM12 14h7v7h-7z"/></svg></button>
          <button class="ml-3 shrink-0" aria-label="Reading view"><svg class="h-[22px] w-5" viewBox="0 0 20 22" fill="#f4f4f6" stroke="#555" stroke-width="1.500"><path d="M1 2h7l2 2 2-2h7v16h-7l-2 3-2-3H1zM10 4v16M3 6h5M3 10h5M3 14h5M12 6h5M12 10h5M12 14h5"/></svg></button>
          <button class="ml-3 shrink-0" aria-label="Slide show"><svg class="h-[22px] w-5" viewBox="0 0 20 22" fill="#fff" stroke="#555" stroke-width="2"><path d="M0 1h20M3 1v11h16M10 12v8M5 21h10"/></svg></button>
        </div>
      </footer>
    </div>

    <!-- Arrow callouts -->
    <svg class="absolute top-[475px] left-[321px] z-30 h-48 w-[58px]"><use href="#arrow"/></svg>
    <svg class="absolute top-[492px] left-[530px] z-30 h-48 w-[58px]"><use href="#arrow"/></svg>
    <svg class="absolute top-[475px] left-[739px] z-30 h-48 w-[58px]"><use href="#arrow"/></svg>
    <svg class="absolute top-[718px] left-[343px] z-30 h-48 w-[58px]"><use href="#arrow"/></svg>
    <svg class="absolute top-[729px] left-[543px] z-30 h-48 w-[58px]"><use href="#arrow"/></svg>
    <svg class="absolute top-[718px] left-[713px] z-30 h-48 w-[58px]"><use href="#arrow"/></svg>
    <svg class="absolute top-[986px] left-[343px] z-30 h-48 w-[58px]"><use href="#arrow"/></svg>
    <svg class="absolute top-[987px] left-[543px] z-30 h-48 w-[58px]"><use href="#arrow"/></svg>
    <svg class="absolute top-[987px] left-[731px] z-30 h-48 w-[58px]"><use href="#arrow"/></svg>

    <!-- Audio clip -->
    <svg class="absolute right-10 bottom-[42px] z-30 h-[124px] w-[130px] drop-shadow-md" viewBox="0 0 130 124">
      <path d="M4 45h22L60 12c2-2 5-1 5 2v93c0 3-3 4-5 2L26 77H4z" fill="url(#gSpeaker)" stroke="#fff" stroke-width="4" stroke-linejoin="round"/>
      <g stroke-linecap="round"><path d="M85 19l12-13M101 38l17-7M106 61h18M101 83l15 6M87 102l11 15" stroke="#fff" stroke-width="12"/><path d="M85 19l12-13M101 38l17-7M106 61h18M101 83l15 6M87 102l11 15" stroke="#adadad" stroke-width="7"/></g>
    </svg>
  </div>
</body>
</html>
